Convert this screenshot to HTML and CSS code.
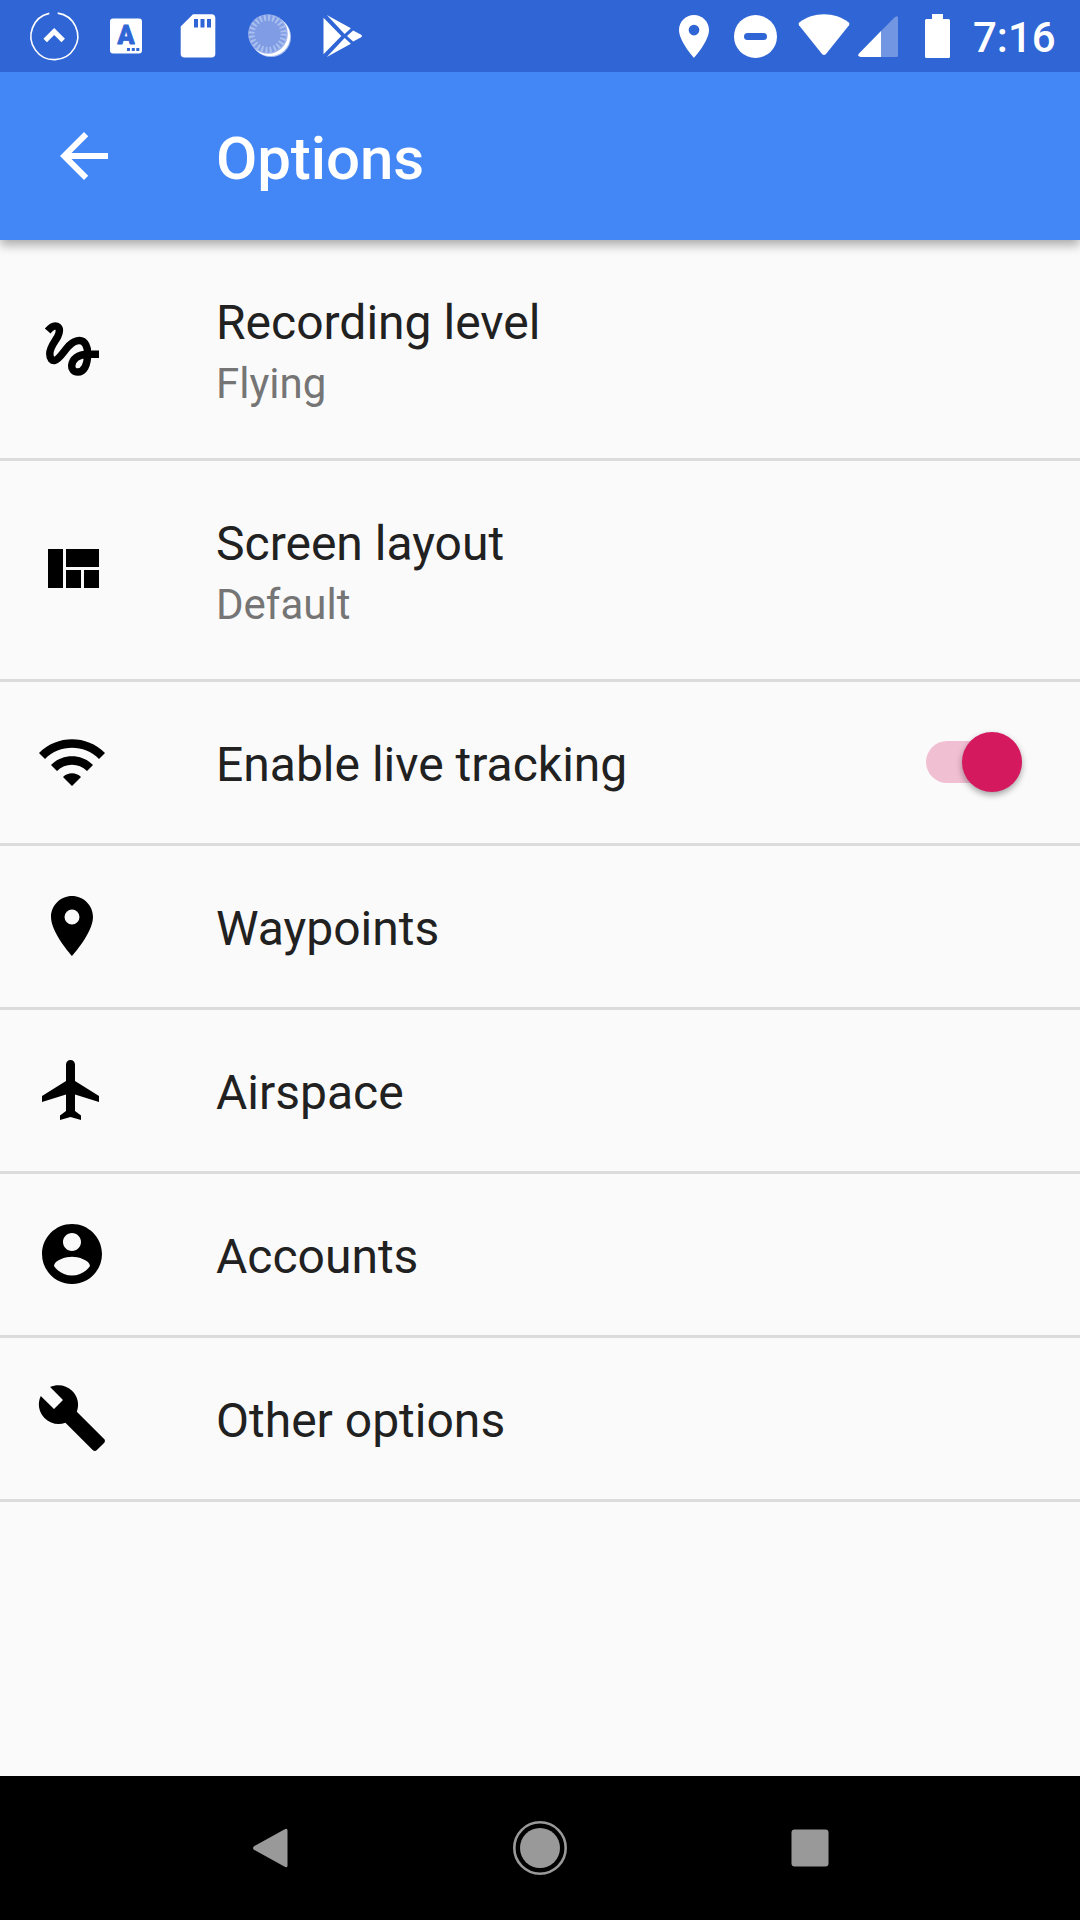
FILE: index.html
```html
<!DOCTYPE html>
<html lang="en">
<head>
<meta charset="utf-8">
<title>Options</title>
<link rel="stylesheet" href="styles.css">
</head>
<body>
<div class="screen">
  <header class="status">
    <div class="status-left">
      <svg class="notif" viewBox="0 0 72 72"><path d="M39.700 13.100A23.400 23.400 0 1 1 31.300 13.400" fill="none" stroke="#fff" stroke-width="1.600"/><path d="M27.200 40.500 36.200 31.500 45.200 40.500" fill="none" stroke="#fff" stroke-width="5"/></svg>
      <svg class="notif" viewBox="0 0 72 72"><rect x="20" y="18.500" width="32" height="35" rx="3" fill="#fff"/><text class="letter" x="36" y="44" text-anchor="middle">A</text><path d="M37 48h3v3h-3zM41.800 48h3v3h-3zM46.300 48h3v3h-3z" class="cut"/></svg>
      <svg class="notif" viewBox="0 0 72 72"><path d="M31 14.300H49.500a3.800 3.800 0 0 1 3.800 3.800V53.700a3.800 3.800 0 0 1-3.800 3.800H22.500a3.800 3.800 0 0 1-3.800-3.800V26.500z" fill="#fff"/><path d="M32 19h4v8.500h-4zM38.500 19h4v8.500h-4zM45 19h4v8.500h-4z" class="cut"/></svg>
      <svg class="notif" viewBox="0 0 72 72"><circle cx="37" cy="37" r="20" fill="#a9bff0"/><circle cx="36.300" cy="36.300" r="19.800" fill="#fff"/><circle cx="34" cy="34" r="19.800" fill="#9db3ec"/><circle cx="33.600" cy="33.800" r="18.800" fill="#7f9ce4"/><circle cx="33.600" cy="33.800" r="16" fill="none" stroke="#a9bff0" stroke-width="6" stroke-dasharray="2 2.189"/></svg>
      <svg class="notif" viewBox="0 0 72 72"><g fill="#fff"><path d="M17.500 17.800 35.300 36 17.500 54.200z"/><path d="M20.800 15 44.900 28.300 38.600 34.100z"/><path d="M20.800 57 44.900 43.700 38.600 37.900z"/><path d="M47.200 30.400 55.200 34.700Q57 36 55.200 37.300L47.200 41.600 41 36z"/></g></svg>
    </div>
    <div class="status-right">
      <svg class="s-pin" viewBox="5 2 14 20"><path fill="#fff" d="M12 2C8.130 2 5 5.130 5 9c0 5.250 7 13 7 13s7-7.750 7-13c0-3.870-3.130-7-7-7zm0 9.500a2.500 2.500 0 0 1 0-5 2.500 2.500 0 0 1 0 5z"/></svg>
      <svg class="s-dnd" viewBox="0 0 43 43"><circle cx="21.500" cy="21.500" r="21.500" fill="#fff"/><rect x="10" y="18" width="23" height="7" rx="3.500" class="cut"/></svg>
      <svg class="s-wifi" viewBox="0 0 52 42"><path fill="#fff" d="M1.300 8.500C8 3 17 .2 26 .2S44 3 50.700 8.500Q52 9.800 51 11.300L28 40Q26 42 24 40L1 11.300Q0 9.800 1.300 8.500z"/></svg>
      <svg class="s-cell" viewBox="0 0 40 41"><path fill="#fff" d="M1 37.500 23 15V41H2.500Q-1 40.500 1 37.500z"/><path fill="#fff" opacity=".32" d="M23 15 37 1Q40-1 40 2V39.500Q40 41 38.500 41H23z"/></svg>
      <svg class="s-batt" viewBox="0 0 25 44"><path fill="#fff" d="M7 0H18V5H23.500Q25 5 25 6.500V42.500Q25 44 23.500 44H1.500Q0 44 0 42.500V6.500Q0 5 1.500 5H7z"/></svg>
      <span class="clock">7:16</span>
    </div>
  </header>
  <div class="appbar">
    <svg class="icon" viewBox="0 0 24 24"><path fill="#fff" d="M20 11H7.830l5.590-5.590L12 4l-8 8 8 8 1.410-1.410L7.830 13H20v-2z"/></svg>
    <h1 class="title">Options</h1>
  </div>
  <main class="list">
    <div class="row tall">
      <svg class="icon" viewBox="0 0 24 24"><path class="squiggle" d="M3.900 6C4.900 4.800 5.900 4 6.900 4.400C8.200 4.900 7.900 6.500 7.200 7.900C6.300 9.600 4.600 11.300 4.600 13.600C4.600 15.300 5.400 16 6.300 15.800C7.700 15.500 9.300 12.700 10.900 11C12 9.900 13.200 9.200 14.500 9.200C16.400 9.200 17.300 11.500 17.200 13.600C17.200 17.500 15.900 19.700 13.900 19.700C12.600 19.700 11.800 18.700 11.900 17.500C12.100 15.400 14 13.750 17.200 13.750H21"/></svg>
      <div class="text"><div class="label">Recording level</div><div class="sub">Flying</div></div>
    </div>
    <div class="row tall">
      <svg class="icon" viewBox="0 0 24 24"><path d="M10 18h5v-6h-5v6zm-6 0h5V5H4v13zm12 0h5v-6h-5v6zM10 5v6h11V5H10z"/></svg>
      <div class="text"><div class="label">Screen layout</div><div class="sub">Default</div></div>
    </div>
    <div class="row">
      <svg class="icon" viewBox="0 0 24 24"><path d="M1 9l2 2c4.970-4.970 13.030-4.970 18 0l2-2C16.930 2.930 7.080 2.930 1 9zm8 8l3 3 3-3c-1.650-1.660-4.340-1.660-6 0zm-4-4l2 2c2.760-2.760 7.240-2.760 10 0l2-2C15.140 9.140 8.870 9.140 5 13z"/></svg>
      <div class="text"><div class="label">Enable live tracking</div></div>
      <div class="switch"><div class="thumb"></div></div>
    </div>
    <div class="row">
      <svg class="icon" viewBox="0 0 24 24"><path d="M12 2C8.130 2 5 5.130 5 9c0 5.250 7 13 7 13s7-7.750 7-13c0-3.870-3.130-7-7-7zm0 9.500a2.500 2.500 0 0 1 0-5 2.500 2.500 0 0 1 0 5z"/></svg>
      <div class="text"><div class="label">Waypoints</div></div>
    </div>
    <div class="row">
      <svg class="icon" viewBox="0 0 24 24"><path d="M21 16v-2l-8-5V3.500c0-.83-.67-1.500-1.500-1.500S10 2.670 10 3.500V9l-8 5v2l8-2.500V19l-2 1.500V22l3.500-1 3.500 1v-1.500L13 19v-5.500l8 2.500z"/></svg>
      <div class="text"><div class="label">Airspace</div></div>
    </div>
    <div class="row">
      <svg class="icon" viewBox="0 0 24 24"><path d="M12 2C6.480 2 2 6.480 2 12s4.480 10 10 10 10-4.480 10-10S17.520 2 12 2zm0 3c1.660 0 3 1.340 3 3s-1.340 3-3 3-3-1.340-3-3 1.340-3 3-3zm0 14.200c-2.500 0-4.710-1.280-6-3.220.03-1.990 4-3.080 6-3.080 1.990 0 5.970 1.090 6 3.080-1.290 1.940-3.500 3.220-6 3.220z"/></svg>
      <div class="text"><div class="label">Accounts</div></div>
    </div>
    <div class="row">
      <svg class="icon" viewBox="0 0 24 24"><path d="M22.700 19l-9.100-9.100c.9-2.300.4-5-1.500-6.900-2-2-5-2.400-7.400-1.300L9 6 6 9 1.600 4.700C.4 7.100.9 10.100 2.900 12.100c1.900 1.900 4.600 2.400 6.900 1.500l9.100 9.100c.4.4 1 .4 1.400 0l2.300-2.300c.5-.4.5-1.100.1-1.400z"/></svg>
      <div class="text"><div class="label">Other options</div></div>
    </div>
  </main>
  <nav class="navbar">
    <svg viewBox="0 0 72 72"><path d="M50.300 17.400Q53.500 15.500 53.500 18.500V53.500Q53.500 56.500 50.300 54.600L20 37.800Q18 36 20 34.200z"/></svg>
    <svg viewBox="0 0 72 72"><circle cx="36" cy="36" r="20"/><circle cx="36" cy="36" r="25.700" class="ring"/></svg>
    <svg viewBox="0 0 72 72"><rect x="17.500" y="17.500" width="37" height="37" rx="3"/></svg>
  </nav>
</div>
</body>
</html>
```
FILE: styles.css
```css
* { box-sizing: border-box; }

body {
  margin: 0;
  font-family: Roboto, "Noto Sans", sans-serif;
  background: #fafafa;
}

svg { display: block; flex: none; }

.screen {
  width: 1080px;
  height: 1920px;
  display: flex;
  flex-direction: column;
  overflow: hidden;
}

.status {
  height: 72px;
  flex: none;
  display: flex;
  justify-content: space-between;
  background: #3065d5;
  padding: 0 25px 0 18px;
  z-index: 2;
}

.status-left { display: flex; }
.notif { width: 72px; height: 72px; }
.cut { fill: #3065d5; }
.letter { font-size: 25px; font-weight: 900; fill: #3065d5; stroke: #3065d5; stroke-width: 0.8px; stroke-linejoin: round; }

.status-right { display: flex; align-items: flex-start; }
.s-pin { width: 30px; height: 43px; margin: 15px 25px 0 0; }
.s-dnd { width: 43px; height: 43px; margin: 15px 21px 0 0; }
.s-wifi { width: 52px; height: 42px; margin: 14px 8px 0 0; }
.s-cell { width: 40px; height: 41px; margin: 16px 27px 0 0; }
.s-batt { width: 25px; height: 44px; margin: 14px 23px 0 0; }
.clock {
  width: 82px;
  font-size: 42px;
  font-weight: 500;
  line-height: 76px;
  color: #fff;
}

.appbar {
  height: 168px;
  flex: none;
  display: flex;
  align-items: center;
  gap: 96px;
  padding-left: 48px;
  background: #4387f7;
  box-shadow: 0 5px 10px rgba(0, 0, 0, 0.32);
  z-index: 1;
}

.icon { width: 72px; height: 72px; }
.squiggle { fill: none; stroke: #000; stroke-width: 2.5px; }

.title {
  margin: 5px 0 0;
  font-size: 60px;
  font-weight: 500;
  line-height: 70px;
  letter-spacing: -0.1px;
  color: #fff;
}

.list { flex: 1; }

.row {
  height: 164px;
  display: flex;
  align-items: flex-start;
  gap: 108px;
  padding: 44px 58px 0 36px;
  border-bottom: 3px solid #dbdbdb;
}
.row.tall { height: 221px; padding-top: 73px; }

.text {
  flex: 1;
  padding-top: 11px;
}
.tall .text { margin-top: -29px; }
.label { font-size: 48px; line-height: 56px; color: #212121; }
.sub { margin-top: 8px; font-size: 42px; line-height: 50px; color: #757575; }

.switch {
  width: 96px;
  height: 42px;
  display: flex;
  align-items: center;
  justify-content: flex-end;
  margin-top: 15px;
  border-radius: 21px;
  background: #f1bfd2;
}
.thumb {
  width: 60px;
  height: 60px;
  flex: none;
  border-radius: 50%;
  background: #d4195f;
  box-shadow: 0 3px 6px rgba(0, 0, 0, 0.35);
}

.navbar {
  height: 144px;
  flex: none;
  display: flex;
  justify-content: center;
  align-items: center;
  gap: 198px;
  background: #000;
}
.navbar svg { width: 72px; height: 72px; fill: #999; }
.navbar .ring { fill: none; stroke: #999; stroke-width: 2.6px; }
```
